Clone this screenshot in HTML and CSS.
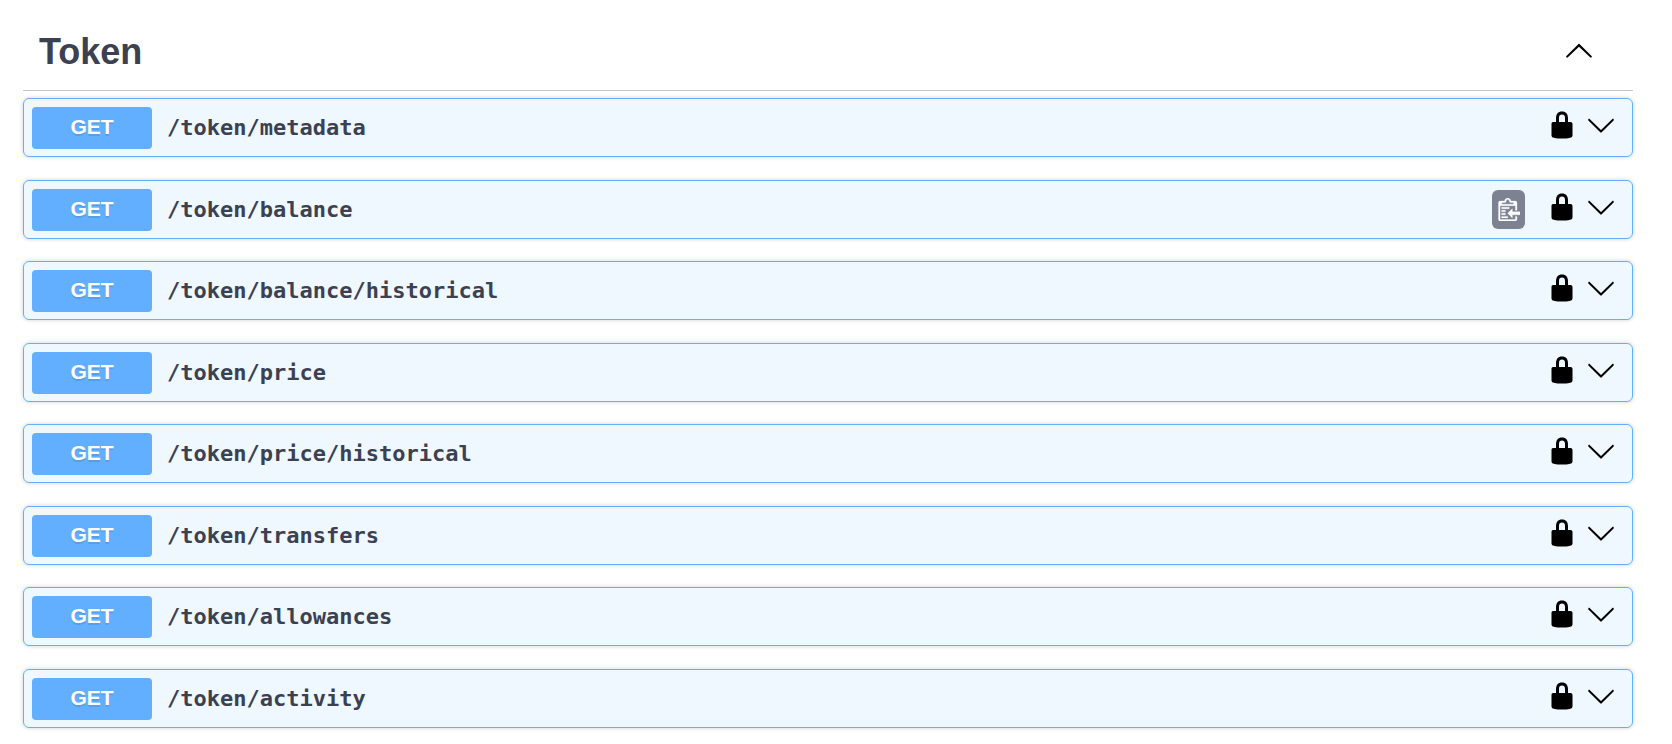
FILE: index.html
```
<!DOCTYPE html>
<html lang="en">
<head>
  <meta charset="UTF-8" />
  <meta name="viewport" content="width=device-width, initial-scale=1.0"/>
  <title>Token API</title>
  <link rel="stylesheet" href="styles.css">
</head>
<body>
  <!-- shared icons -->
  <svg class="sprite" aria-hidden="true">
    <symbol id="lock" viewBox="0 0 20 20">
      <path d="M15.8 8H14V5.6C14 2.703 12.665 1 10 1 7.334 1 6 2.703 6 5.6V8H4c-.553 0-1 .646-1 1.199V17c0 .549.428 1.139.951 1.307l1.197.387C5.672 18.861 6.55 19 7.1 19h5.8c.549 0 1.428-.139 1.951-.307l1.196-.387c.524-.167.953-.757.953-1.306V9.199C17 8.646 16.352 8 15.8 8zM12 8H8V5.199C8 3.754 8.797 3 10 3c1.203 0 2 .754 2 2.199V8z"/>
    </symbol>
    <symbol id="arrow-down" viewBox="0 0 20 20">
      <path d="M17.418 6.109c.272-.268.709-.268.979 0s.271.701 0 .969l-7.908 7.83c-.27.268-.707.268-.979 0l-7.908-7.83c-.27-.268-.27-.701 0-.969.271-.268.709-.268.979 0L10 13.25l7.418-7.141z"/>
    </symbol>
    <symbol id="arrow-up" viewBox="0 0 20 20">
      <path d="M17.418 14.908c.272.268.709.268.979 0s.271-.701 0-.969l-7.908-7.83c-.27-.268-.707-.268-.979 0l-7.908 7.83c-.27.268-.27.701 0 .969.271.268.709.268.979 0L10 7.767l7.418 7.141z"/>
    </symbol>
    <symbol id="copy" viewBox="-1 1 15 15">
      <path fill-rule="evenodd" d="M2 13h4v1H2v-1zm5-6H2v1h5V7zm2 3V8l-3 3 3 3v-2h5v-2H9zM4.5 9H2v1h2.5V9zM2 12h2.5v-1H2v1zm9 1h1v2c-.02.28-.11.52-.3.7-.19.18-.42.28-.7.3H1c-.55 0-1-.45-1-1V4c0-.55.45-1 1-1h3c0-1.11.89-2 2-2 1.11 0 2 .89 2 2h3c.55 0 1 .45 1 1v5h-1V6H1v9h10v-2zM2 5h8c0-.55-.45-1-1-1H8c-.55 0-1-.45-1-1s-.45-1-1-1-1 .45-1 1-.45 1-1 1H3c-.55 0-1 .45-1 1z"/>
    </symbol>
  </svg>

  <main class="section">
    <div class="section-header">
      <h2>Token</h2>
      <button class="icon-btn" aria-label="Collapse Token"><svg class="icon"><use href="#arrow-up"/></svg></button>
    </div>

    <div class="operations">
      <div class="operation">
        <button class="summary"><span class="method">GET</span><span class="path">/token/metadata</span></button>
        <div class="actions">
          <button class="icon-btn" aria-label="Authorize"><svg class="icon"><use href="#lock"/></svg></button>
          <button class="icon-btn" aria-label="Expand"><svg class="icon"><use href="#arrow-down"/></svg></button>
        </div>
      </div>

      <div class="operation">
        <button class="summary"><span class="method">GET</span><span class="path">/token/balance</span></button>
        <button class="copy-btn" aria-label="Copy path"><svg class="copy-icon"><use href="#copy"/></svg></button>
        <div class="actions">
          <button class="icon-btn" aria-label="Authorize"><svg class="icon"><use href="#lock"/></svg></button>
          <button class="icon-btn" aria-label="Expand"><svg class="icon"><use href="#arrow-down"/></svg></button>
        </div>
      </div>

      <div class="operation">
        <button class="summary"><span class="method">GET</span><span class="path">/token/balance/historical</span></button>
        <div class="actions">
          <button class="icon-btn" aria-label="Authorize"><svg class="icon"><use href="#lock"/></svg></button>
          <button class="icon-btn" aria-label="Expand"><svg class="icon"><use href="#arrow-down"/></svg></button>
        </div>
      </div>

      <div class="operation">
        <button class="summary"><span class="method">GET</span><span class="path">/token/price</span></button>
        <div class="actions">
          <button class="icon-btn" aria-label="Authorize"><svg class="icon"><use href="#lock"/></svg></button>
          <button class="icon-btn" aria-label="Expand"><svg class="icon"><use href="#arrow-down"/></svg></button>
        </div>
      </div>

      <div class="operation">
        <button class="summary"><span class="method">GET</span><span class="path">/token/price/historical</span></button>
        <div class="actions">
          <button class="icon-btn" aria-label="Authorize"><svg class="icon"><use href="#lock"/></svg></button>
          <button class="icon-btn" aria-label="Expand"><svg class="icon"><use href="#arrow-down"/></svg></button>
        </div>
      </div>

      <div class="operation">
        <button class="summary"><span class="method">GET</span><span class="path">/token/transfers</span></button>
        <div class="actions">
          <button class="icon-btn" aria-label="Authorize"><svg class="icon"><use href="#lock"/></svg></button>
          <button class="icon-btn" aria-label="Expand"><svg class="icon"><use href="#arrow-down"/></svg></button>
        </div>
      </div>

      <div class="operation">
        <button class="summary"><span class="method">GET</span><span class="path">/token/allowances</span></button>
        <div class="actions">
          <button class="icon-btn" aria-label="Authorize"><svg class="icon"><use href="#lock"/></svg></button>
          <button class="icon-btn" aria-label="Expand"><svg class="icon"><use href="#arrow-down"/></svg></button>
        </div>
      </div>

      <div class="operation">
        <button class="summary"><span class="method">GET</span><span class="path">/token/activity</span></button>
        <div class="actions">
          <button class="icon-btn" aria-label="Authorize"><svg class="icon"><use href="#lock"/></svg></button>
          <button class="icon-btn" aria-label="Expand"><svg class="icon"><use href="#arrow-down"/></svg></button>
        </div>
      </div>
    </div>
  </main>
</body>
</html>
```
FILE: styles.css
```
* {
  box-sizing: border-box;
}
body {
  font-family: Arial, "Liberation Sans", sans-serif;
  background: #fff;
  color: #3b4151;
  margin: 0;
}
button {
  font: inherit;
  color: inherit;
  background: none;
  border: none;
  margin: 0;
  padding: 0;
  cursor: pointer;
}
.sprite {
  display: none;
}
.section {
  display: flex;
  flex-direction: column;
  min-height: 100vh;
  padding: 12px 39px 16px 23px;
}
.section-header {
  display: flex;
  align-items: center;
  justify-content: space-between;
  padding: 15px 39px 17px 16px;
  border-bottom: 1px solid #c4c6ca;
  margin-bottom: 7px;
}
h2 {
  font-size: 36px;
  line-height: 42px;
  margin: 0;
  padding-top: 4px;
}

/* Rows */
.operations {
  flex: 1;
  display: flex;
  flex-direction: column;
  justify-content: space-between;
  gap: 22px;
}
.operation {
  display: flex;
  align-items: center;
  padding: 8px 8px 7px;
  background: rgba(97,175,254,0.1);
  border: 1px solid #61affe;
  border-radius: 6px;
  box-shadow: 0 0 4px rgba(0,0,0,0.19);
}
.summary {
  flex: 1;
  display: flex;
  align-items: center;
  text-align: left;
}
.method {
  width: 120px;
  padding: 8px 0 10px;
  font-size: 21px;
  font-weight: bold;
  line-height: 24px;
  text-align: center;
  color: #fff;
  background: #61affe;
  border-radius: 4px;
  text-shadow: 0 2px 0 rgba(0,0,0,0.1);
}
.path {
  padding: 0 15px;
  font-family: Consolas, "DejaVu Sans Mono", monospace;
  font-size: 22px;
  font-weight: bold;
  line-height: 28px;
}
.actions {
  display: flex;
  gap: 9px;
  padding: 0 8px 6px 0;
}
.icon-btn, .copy-btn {
  display: flex;
  align-items: center;
  justify-content: center;
}
.icon {
  width: 30px;
  height: 30px;
  fill: #000;
}
.copy-btn {
  width: 33px;
  height: 39px;
  margin-right: 22px;
  background: #7d8293;
  border-radius: 6px;
}
.copy-icon {
  width: 23px;
  height: 23px;
  fill: #fff;
  stroke: #fff;
  stroke-width: 0.2;
}
```
